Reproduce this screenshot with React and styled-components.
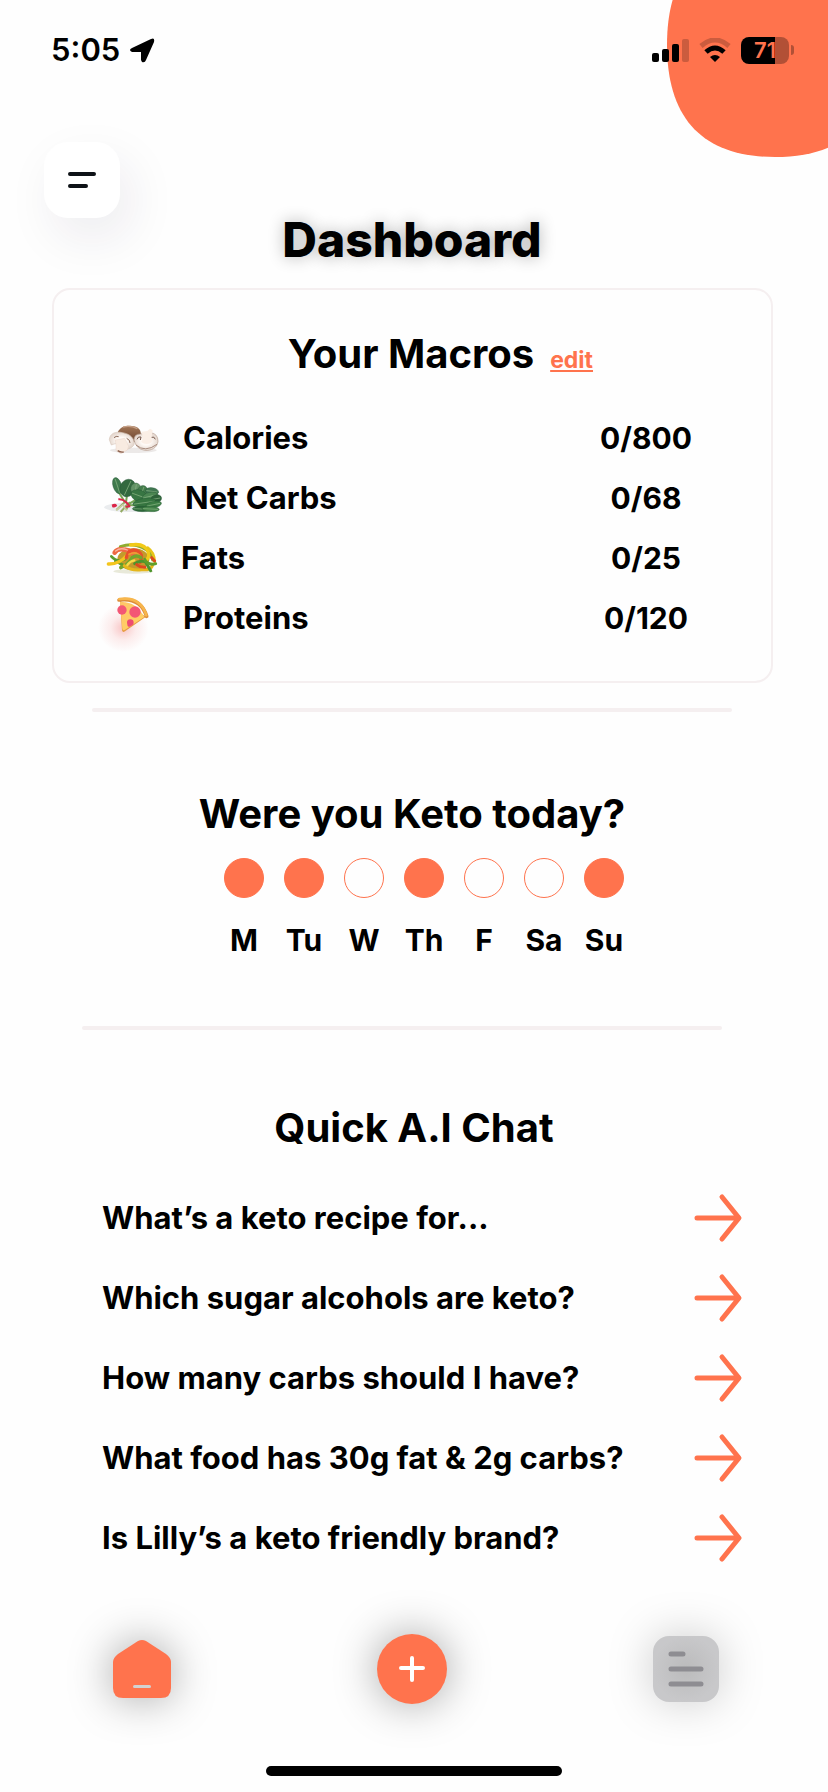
import React, { useState } from "react";
import styled, { createGlobalStyle } from "styled-components";

const ORANGE = "#ff734d";
const RULE = "#f5eff0";

const GlobalStyle = createGlobalStyle`
  *, *::before, *::after { box-sizing: border-box; }
  body {
    margin: 0;
    background: #fefefe;
    color: #000;
    font-family: Inter, "Liberation Sans", sans-serif;
    font-weight: 700;
  }
  h1, h2, ul { margin: 0; padding: 0; }
  ul { list-style: none; }
  button { font: inherit; color: inherit; border: 0; background: none; padding: 0; cursor: pointer; }
`;

const Screen = styled.div`
  position: relative;
  display: flex;
  flex-direction: column;
  min-height: 100vh;
  overflow: hidden;
`;

const CornerBlob = styled.svg`
  position: absolute;
  top: 0;
  right: 0;
  width: 161px;
  height: 157px;
`;

const StatusBar = styled.div`
  position: relative;
  display: flex;
  align-items: center;
  justify-content: space-between;
  height: 100px;
  padding: 0 34px 0 51px;
`;

const StatusGroup = styled.div`
  display: flex;
  align-items: center;
  gap: 10px;
`;

const Clock = styled.span`
  font-size: 31px;
  font-weight: 600;
  line-height: 40px;
`;

const Battery = styled.div`
  display: flex;
  align-items: center;
`;

const BatteryBody = styled.span`
  width: 48px;
  height: 27px;
  border-radius: 8px;
  background: linear-gradient(to right, #000 0 34px, #b25036 34px);
  color: ${ORANGE};
  font-size: 22px;
  font-weight: 600;
  line-height: 27px;
  text-align: center;
`;

const BatteryTip = styled.span`
  width: 3px;
  height: 10px;
  margin-left: 2px;
  border-radius: 0 4px 4px 0;
  background: #b25036;
`;

const MenuButton = styled.button`
  display: grid;
  place-items: center;
  width: 76px;
  height: 76px;
  margin: 42px 0 0 44px;
  border-radius: 24px;
  background: #fff;
  box-shadow: 10px 20px 50px rgba(40, 30, 60, 0.08);
`;

const PageTitle = styled.h1`
  padding-right: 4px;
  font-size: 48px;
  font-weight: 800;
  line-height: 44px;
  text-align: center;
  text-shadow: 0 0 16px rgba(0, 0, 0, 0.3);
`;

const Card = styled.section`
  margin: 26px 55px 0 52px;
  padding: 40px 54px 33px 51px;
  border: 2px solid ${RULE};
  border-radius: 18px;
`;

const CardHeader = styled.header`
  display: grid;
  grid-template-columns: 1fr auto 1fr;
  column-gap: 16px;
  align-items: baseline;
`;

const SectionTitle = styled.h2`
  font-size: 40px;
  line-height: 48px;
  text-align: center;
`;

const HeaderTitle = styled(SectionTitle)`
  grid-column: 2;
`;

const EditLink = styled.a`
  justify-self: start;
  color: ${ORANGE};
  font-size: 23px;
  text-decoration: underline;
  text-decoration-thickness: 2px;
  text-underline-offset: 2px;
`;

const MacroList = styled.ul`
  margin-top: 30px;
`;

const MacroRow = styled.li`
  display: flex;
  align-items: center;
  gap: 20px;
  height: 60px;
  font-size: 31px;
  line-height: 40px;
`;

const MacroValue = styled.span`
  width: 120px;
  margin: 0 11px 0 auto;
  font-size: 30px;
  text-align: center;
`;

const FoodArt = styled.svg`
  flex: none;
  overflow: visible;
`;

const Divider = styled.hr`
  width: calc(100% - 188px);
  height: 4px;
  margin: ${(p) => (p.$lower ? "66px 0 74px 82px" : "25px 0 78px 92px")};
  border: 0;
  border-radius: 2px;
  background: ${RULE};
`;

const KetoTitle = styled(SectionTitle)`
  padding-right: 4px;
`;

const Days = styled.div`
  display: flex;
  justify-content: center;
  gap: 20px;
  margin-top: 20px;
  padding-left: 20px;
`;

const Day = styled.label`
  display: flex;
  flex-direction: column;
  align-items: center;
  gap: 22px;
  width: 40px;
  font-size: 30px;
  line-height: 40px;
  cursor: pointer;
`;

const DayTick = styled.input`
  appearance: none;
  width: 40px;
  height: 40px;
  margin: 0;
  border: 1px solid ${ORANGE};
  border-radius: 50%;
  &:checked { background: ${ORANGE}; }
`;

const ChatList = styled.ul`
  margin-top: 26px;
  padding: 0 85px 0 102px;
`;

const ChatButton = styled.button`
  display: flex;
  align-items: center;
  justify-content: space-between;
  width: 100%;
  height: 80px;
  font-size: 31px;
  line-height: 40px;
  text-align: left;
`;

const NavBar = styled.nav`
  display: flex;
  align-items: center;
  justify-content: space-between;
  height: 100px;
  margin-top: 41px;
  padding: 0 109px 0 113px;
`;

const NavButton = styled.button`
  display: flex;
  filter: drop-shadow(0 0 22px rgba(0, 0, 0, ${(p) => p.$shade}));
`;

const HomeIndicator = styled.div`
  width: 296px;
  height: 10px;
  margin: 47px auto 16px;
  border-radius: 5px;
  background: #000;
`;

const MushroomArt = () => (
  <FoodArt width="58" height="35" viewBox="45 60 174 105" aria-hidden="true">
    <defs>
      <linearGradient id="cap" x1="0" y1="0" x2="0" y2="1">
        <stop offset="0" stopColor="#a47757" />
        <stop offset="1" stopColor="#68412c" />
      </linearGradient>
      <radialGradient id="flesh">
        <stop offset="0.4" stopColor="#fffaf6" />
        <stop offset="1" stopColor="#e5d8cf" />
      </radialGradient>
    </defs>
    <ellipse cx="130" cy="148" rx="70" ry="8" fill="#d9d4d2" opacity="0.5" />
    <path d="M83 94C90 78 107 72 126 75C144 77 152 84 153 100L142 124L116 122Z" fill="url(#cap)" />
    <path d="M99 78Q123 73 142 83" stroke="#c5a087" strokeWidth="4" fill="none" />
    <path d="M58 116C59 98 76 90 98 95C121 99 135 113 132 131C126 142 110 147 96 145Q94 134 88 129Q76 125 64 132Z" fill="url(#flesh)" stroke="#d8c7bb" strokeWidth="2" />
    <path d="M72 110Q78 104 86 107M110 112Q121 117 120 126" stroke="#8d6c5b" strokeWidth="3" fill="none" />
    <path d="M76 117L104 112L111 125Q120 136 112 147L93 158Q84 154 78 148L78 134Z" fill="#f8ebe1" stroke="#e0c9bb" strokeWidth="1" />
    <path d="M83 149Q92 155 101 153" stroke="#8b604d" strokeWidth="4" fill="none" />
    <path d="M132 117Q132 99 151 99L182 95Q204 98 204 121C202 141 183 150 164 148Q138 144 132 117Z" fill="url(#flesh)" stroke="#b8a092" strokeWidth="2" />
    <path d="M141 115Q144 105 153 108L151 117M184 109Q193 105 196 115" stroke="#75574b" strokeWidth="3" fill="none" />
    <path d="M154 92L172 90L180 83L188 88L184 112Q190 121 181 127Q166 132 153 123Q162 112 154 92Z" fill="#fbefe6" />
    <path d="M138 132Q165 156 201 130" stroke="#a78b7d" strokeWidth="3" fill="none" />
  </FoodArt>
);

const leaves = [
  [82, 255, 13, 25, -18, "#3f7a4d"], [113, 262, 23, 27, 25, "#33693f"], [137, 264, 15, 17, 10, "#629365"],
  [157, 272, 15, 18, 20, "#447c4b"], [186, 272, 20, 11, 8, "#3f7650"], [147, 285, 25, 17, 20, "#387643"],
  [180, 287, 24, 12, -14, "#4b8652"], [199, 294, 16, 12, -10, "#2d6239"], [163, 306, 35, 13, -8, "#367540"],
  [191, 312, 24, 10, -12, "#3b7c43"], [156, 325, 29, 8, 2, "#2d6839"], [182, 325, 26, 8, 3, "#438248"],
];

const GreensArt = () => (
  <FoodArt width="60" height="40" viewBox="45 232 180 120" aria-hidden="true">
    <ellipse cx="118" cy="320" rx="75" ry="14" fill="#dfe2e5" opacity="0.65" />
    <path d="M80 327L108 301M92 334L117 306M108 328L121 304" stroke="#94ab65" strokeWidth="6" />
    <path d="M78 329L99 312L110 330" stroke="#c8cda0" strokeWidth="5" fill="none" />
    <path d="M82 268L104 303M113 268L108 305M150 290L113 312M173 315L116 313" stroke="#76a555" strokeWidth="6" />
    {leaves.map(([x, y, rx, ry, turn, fill]) => (
      <g key={`${x}-${y}`} transform={`translate(${x} ${y}) rotate(${turn})`}>
        <ellipse rx={rx} ry={ry} fill={fill} stroke="#1e5030" strokeWidth="1" />
        {rx > ry ? (
          <path d={`M${-rx + 3} 0H${rx - 4}`} stroke="#8ab584" strokeWidth="2" />
        ) : (
          <path d={`M0 ${ry - 3}V${-ry + 4}`} stroke="#8ab584" strokeWidth="2" />
        )}
      </g>
    ))}
    <path d="M85 296Q98 295 106 303Q114 309 119 318M66 315Q76 310 78 315Q74 319 67 316M107 318L121 317" stroke="#db2548" strokeWidth="6" fill="none" />
  </FoodArt>
);

const PeppersArt = () => (
  <FoodArt width="56" height="35" viewBox="45 420 168 105" aria-hidden="true" fill="none" strokeLinecap="round">
    <ellipse cx="130" cy="511" rx="60" ry="7" fill="#dedfc9" opacity="0.7" />
    <ellipse cx="130" cy="475" rx="48" ry="33" fill="#c39a2c" />
    <path d="M91 437Q127 424 156 439Q185 452 188 477" stroke="#8fac30" strokeWidth="9" />
    <path d="M122 432Q165 425 175 454Q181 475 161 479" stroke="#f2ca18" strokeWidth="10" />
    <path d="M173 440Q194 455 194 483" stroke="#e7c51a" strokeWidth="8" />
    <path d="M64 466Q81 486 106 474M76 480L99 492" stroke="#5c9c30" strokeWidth="8" />
    <path d="M55 489Q89 490 112 462" stroke="#f4c51d" strokeWidth="10" />
    <path d="M74 455Q82 441 104 446Q129 449 132 467" stroke="#ef6a43" strokeWidth="14" />
    <path d="M77 450Q91 438 112 447" stroke="#f9b5a0" strokeWidth="4" />
    <path d="M109 470Q116 442 139 448Q163 460 150 484" stroke="#e8502c" strokeWidth="10" />
    <path d="M117 460Q139 449 151 466" stroke="#ef9b36" strokeWidth="5" />
    <path d="M92 500Q115 491 126 470Q140 460 153 470" stroke="#72a52d" strokeWidth="10" />
    <path d="M103 494Q125 510 154 506Q180 509 187 495" stroke="#e5b61a" strokeWidth="9" />
    <path d="M134 488Q148 477 166 482L182 509" stroke="#4c952d" strokeWidth="9" />
    <path d="M140 491Q151 500 165 499M185 470L194 480" stroke="#dc4b1e" strokeWidth="9" />
    <path d="M164 475Q170 489 190 490L197 488" stroke="#609e2b" strokeWidth="9" />
    <path d="M112 492Q120 480 133 478" stroke="#f7da45" strokeWidth="7" />
  </FoodArt>
);

const PizzaArt = () => (
  <FoodArt width="58" height="46" viewBox="45 585 174 138" aria-hidden="true">
    <defs>
      <radialGradient id="glow">
        <stop offset="0" stopColor="#ef6464" stopOpacity="0.38" />
        <stop offset="0.5" stopColor="#ef7474" stopOpacity="0.13" />
        <stop offset="1" stopColor="#ef7474" stopOpacity="0" />
      </radialGradient>
      <linearGradient id="cheese" x1="0" y1="0" x2="1" y2="1">
        <stop offset="0" stopColor="#ffc568" />
        <stop offset="1" stopColor="#ffd364" />
      </linearGradient>
    </defs>
    <ellipse cx="100" cy="684" rx="76" ry="72" fill="url(#glow)" />
    <path d="M90 602L168 650L105 694Q98 699 96 691Z" fill="#e69c43" />
    <path d="M90 606Q136 602 163 651L104 690Q98 692 97 686Z" fill="url(#cheese)" />
    <path d="M87 600Q152 591 170 649" fill="none" stroke="#dc8c3b" strokeWidth="11" strokeLinecap="round" />
    <path d="M88 597Q152 588 169 646" fill="none" stroke="#f7b64c" strokeWidth="8" strokeLinecap="round" />
    <circle cx="96" cy="630" r="14" fill="#f35775" />
    <circle cx="135" cy="636" r="17" fill="#f35775" />
    <path d="M111 668A10 10 0 0 1 131 667Q132 673 127 676L117 681Q111 678 111 668Z" fill="#ee4c71" />
  </FoodArt>
);

const macros = [
  { name: "Calories", value: "0/800", Art: MushroomArt },
  { name: "Net Carbs", value: "0/68", Art: GreensArt },
  { name: "Fats", value: "0/25", Art: PeppersArt },
  { name: "Proteins", value: "0/120", Art: PizzaArt },
];

const questions = [
  "What’s a keto recipe for...",
  "Which sugar alcohols are keto?",
  "How many carbs should I have?",
  "What food has 30g fat & 2g carbs?",
  "Is Lilly’s a keto friendly brand?",
];

const dayNames = ["M", "Tu", "W", "Th", "F", "Sa", "Su"];

const ArrowIcon = () => (
  <svg width="50" height="50" viewBox="0 0 50 50" fill="none" stroke={ORANGE} strokeWidth="5" strokeLinecap="round" strokeLinejoin="round" aria-hidden="true">
    <path d="M4 25H45M29 4L46 25L29 46" />
  </svg>
);

export default function App() {
  const [kept, setKept] = useState(["M", "Tu", "Th", "Su"]);
  const toggle = (day) =>
    setKept((days) => (days.includes(day) ? days.filter((d) => d !== day) : [...days, day]));

  return (
    <>
      <GlobalStyle />
      <Screen>
        <CornerBlob viewBox="0 0 161 157" aria-hidden="true">
          <path d="M0 45C0 -29 36 -67 108 -67S216 -29 216 45S180 157 108 157S0 119 0 45Z" fill={ORANGE} />
        </CornerBlob>
        <StatusBar>
          <StatusGroup>
            <Clock>5:05</Clock>
            <svg width="25" height="25" viewBox="0 0 25 25" aria-label="Location in use">
              <path d="M2 10L21 1Q25 -1 24 4L16 22Q15 25 12 24L11 22V14H2Q-2 12 2 10Z" />
            </svg>
          </StatusGroup>
          <StatusGroup>
            <svg width="37" height="24" viewBox="0 0 37 24" aria-label="Signal strength">
              <rect y="15" width="7" height="9" rx="2" />
              <rect x="10" y="11" width="7" height="13" rx="2" />
              <rect x="20" y="6" width="7" height="18" rx="2" />
              <rect x="30" y="1" width="7" height="23" rx="2" fill="#cb5c3e" />
            </svg>
            <svg width="32" height="24" viewBox="0 0 32 24" fill="none" aria-label="Wi-Fi">
              <path d="M2 8Q16 -4 30 8" stroke="#cb5c3e" strokeWidth="5" />
              <path d="M7 14Q16 6 25 14" stroke="#000" strokeWidth="5" />
              <path d="M11 19Q16 15 21 19L16 24Z" fill="#000" />
            </svg>
            <Battery>
              <BatteryBody>71</BatteryBody>
              <BatteryTip />
            </Battery>
          </StatusGroup>
        </StatusBar>

        <MenuButton type="button" aria-label="Menu">
          <svg width="28" height="16" viewBox="0 0 28 16" stroke="#0e1217" strokeWidth="4" strokeLinecap="round" aria-hidden="true">
            <path d="M2 2H26M2 14H18" />
          </svg>
        </MenuButton>
        <PageTitle>Dashboard</PageTitle>

        <Card>
          <CardHeader>
            <HeaderTitle>Your Macros</HeaderTitle>
            <EditLink href="#edit">edit</EditLink>
          </CardHeader>
          <MacroList>
            {macros.map(({ name, value, Art }) => (
              <MacroRow key={name}>
                <Art />
                <span>{name}</span>
                <MacroValue>{value}</MacroValue>
              </MacroRow>
            ))}
          </MacroList>
        </Card>

        <Divider />

        <KetoTitle>Were you Keto today?</KetoTitle>
        <Days>
          {dayNames.map((day) => (
            <Day key={day}>
              <DayTick type="checkbox" checked={kept.includes(day)} onChange={() => toggle(day)} />
              {day}
            </Day>
          ))}
        </Days>

        <Divider $lower />

        <SectionTitle>Quick A.I Chat</SectionTitle>
        <ChatList>
          {questions.map((question) => (
            <li key={question}>
              <ChatButton type="button">
                {question}
                <ArrowIcon />
              </ChatButton>
            </li>
          ))}
        </ChatList>

        <NavBar>
          <NavButton type="button" aria-label="Home" $shade={0.36}>
            <svg width="58" height="58" viewBox="0 0 58 58" aria-hidden="true">
              <path d="M25 1Q29 -1 33 1L53 14Q58 18 58 22V48Q58 58 48 58H10Q0 58 0 48V22Q0 18 5 14Z" fill={ORANGE} />
              <path d="M21.500 46.500H36.500" stroke="#d3d1d1" strokeWidth="3" strokeLinecap="round" />
            </svg>
          </NavButton>
          <NavButton type="button" aria-label="Add" $shade={0.36}>
            <svg width="70" height="70" viewBox="0 0 70 70" aria-hidden="true">
              <circle cx="35" cy="35" r="35" fill={ORANGE} />
              <path d="M35 24V46M24 34H46" stroke="#fff" strokeWidth="4" strokeLinecap="round" />
            </svg>
          </NavButton>
          <NavButton type="button" aria-label="Journal" $shade={0.2}>
            <svg width="66" height="66" viewBox="0 0 66 66" aria-hidden="true">
              <defs>
                <radialGradient id="tile">
                  <stop offset="0" stopColor="#bbbbbc" />
                  <stop offset="1" stopColor="#c8c8ca" />
                </radialGradient>
              </defs>
              <rect width="66" height="66" rx="16" fill="url(#tile)" />
              <path d="M18 18H30M18 33H48M18 48H48" stroke="#8e8d92" strokeWidth="5" strokeLinecap="round" />
            </svg>
          </NavButton>
        </NavBar>
        <HomeIndicator />
      </Screen>
    </>
  );
}
